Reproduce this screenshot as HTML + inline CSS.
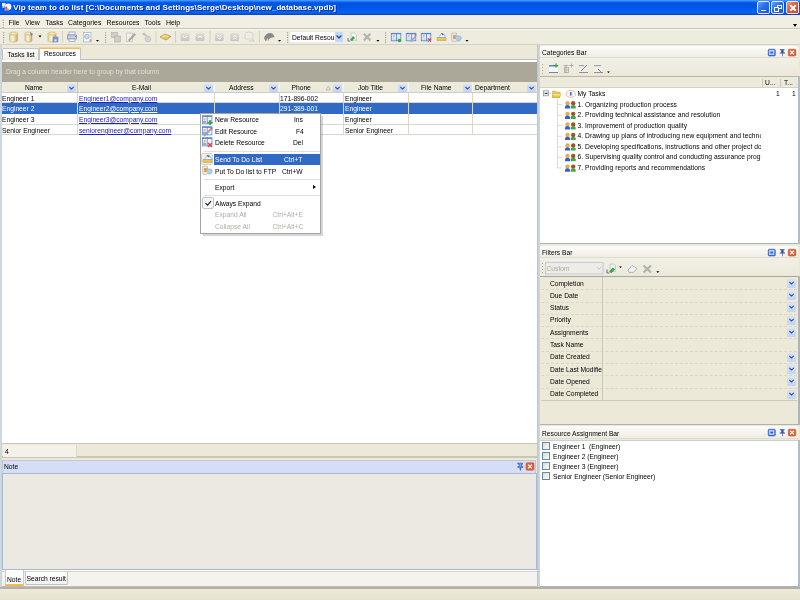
<!DOCTYPE html>
<html><head><meta charset="utf-8">
<style>
*{margin:0;padding:0;box-sizing:border-box}
html,body{width:800px;height:600px;overflow:hidden;background:#ECE9D8;font-family:"Liberation Sans",sans-serif;font-size:6.7px;color:#000;position:relative}
div,span{position:absolute;white-space:nowrap}
#title{left:0;top:0;width:800px;height:15px;background:linear-gradient(#4098FF 0,#3A90FF 1px,#0A5CEA 2px,#0054DF 4px,#0056E4 8px,#0062F6 11px,#0066FA 13px,#1E48B8 14px,#1A3CA0 15px)}
#title .t{left:13.3px;top:3px;color:#fff;font-weight:bold;font-size:8px;letter-spacing:0.07px;text-shadow:1px 1px 0 #0A2A90}
.wb{top:1px;width:13px;height:13px;border:1px solid #E0E8FF;border-radius:2px;background:linear-gradient(135deg,#6CA0FC,#2E6CEC 45%,#1E56D8)}
#menu{left:0;top:15px;width:800px;height:14px;background:#F1EFE3;border-top:1px solid #E6ECFA;border-bottom:1px solid #C9C6B6}
#menu span{top:3.3px;font-size:6.9px}
#tb{left:0;top:29px;width:800px;height:16px;background:#EEEBDF}
.grip{width:2px;background:repeating-linear-gradient(#A8A594 0 1px,transparent 1px 3px)}
.sep{width:1px;background:#C5C2B2;border-right:1px solid #fff}
.dd{width:0;height:0;border-left:2px solid transparent;border-right:2px solid transparent;border-top:2px solid #000}
#left{left:0;top:45px;width:538px;height:543px;background:#ECE9D8}
.hdr{top:82px;height:11px;background:#EBEADB;border-bottom:1px solid #D0CDBE}
.hdr span{top:2px}
.hb{top:84px;width:9px;height:8px;background:linear-gradient(#D6E2FA,#C2D4F6);border-radius:1px}

.row{left:2px;width:535px;height:10.4px;background:#fff;border-bottom:1px solid #D9D6CA}
.row span{top:1.8px}
.row.sel{background:#316AC5;color:#fff}
.lnk{color:#2020C8;text-decoration:underline}
.sel .lnk{color:#fff}
.vl{top:93px;height:41.6px;width:1px;background:#D9D6CA}
.cap{height:12px;background:linear-gradient(#FCFCFA,#EFEDE4);border-bottom:1px solid #E0DDD0;border-radius:2px 2px 0 0}
.cap span{top:3px}
.pbtn{width:8px;height:8px;border-radius:1px}
.blue{background:linear-gradient(#5C8FF0,#2050D0);border:1px solid #1C40B0}
.red{background:linear-gradient(#F07050,#D04020);border:1px solid #B03010}
.ico{width:9px;height:9px;border-radius:1px}
.mi{left:0;width:120px;height:11px}
.mi span{top:2px}
</style></head><body><div id="root" style="left:0;top:0;width:800px;height:600px;overflow:hidden;will-change:transform;background:#ECE9D8">
<!-- Title bar -->
<div id="title">
<svg width="14" height="14" style="position:absolute;left:0;top:0"><rect x="2" y="3" width="3.5" height="3.2" fill="#F0F4FF"/><rect x="2.5" y="6" width="2" height="2" fill="#C8D8F8"/><circle cx="8.2" cy="6.8" r="3.2" fill="#FAFAFF"/><path d="M4.5 8.5 q2 -1 4 0 l0.5 2.3 h-4.5 z" fill="#D88090"/><circle cx="6.3" cy="7.5" r="0.9" fill="#806070"/></svg>
<div class="t">Vip team to do list [C:\Documents and Settings\Serge\Desktop\new_database.vpdb]</div>
<div class="wb" style="left:757px"><div style="left:2.5px;top:7.5px;width:5px;height:1.6px;background:#fff"></div></div>
<div class="wb" style="left:771px"><div style="left:4.5px;top:2.5px;width:5px;height:4px;border:1px solid #fff;border-top-width:1.5px"></div><div style="left:2px;top:5px;width:5px;height:4.5px;border:1px solid #fff;border-top-width:1.5px;background:#2E68E8"></div></div>
<div class="wb" style="left:786px;background:linear-gradient(135deg,#F29A7C,#E2592F 50%,#CC4418)"><div style="left:1.5px;top:5px;width:8px;height:1.8px;background:#fff;transform:rotate(45deg)"></div><div style="left:1.5px;top:5px;width:8px;height:1.8px;background:#fff;transform:rotate(-45deg)"></div></div>
</div>
<!-- Menu -->
<div id="menu">
<svg width="6" height="14" style="position:absolute;left:0;top:0"><g fill="#A8A594"><rect x="2.6" y="3.6" width="1.2" height="1.2"/><rect x="2.6" y="6" width="1.2" height="1.2"/><rect x="2.6" y="8.4" width="1.2" height="1.2"/><rect x="2.6" y="10.8" width="1.2" height="1.2"/></g></svg>
<span style="left:8.5px">File</span><span style="left:25px">View</span><span style="left:45.5px">Tasks</span><span style="left:68px">Categories</span><span style="left:106.5px">Resources</span><span style="left:144.5px">Tools</span><span style="left:166px">Help</span>
<div class="dd" style="left:793px;top:8px;border-width:3px 2.5px 0 2.5px"></div>
</div>
<!-- Toolbar -->
<div id="tb">
<svg width="800" height="16" viewBox="0 29 800 16" style="position:absolute;left:0;top:0">
<defs>
<linearGradient id="cyl" x1="0" x2="1"><stop offset="0" stop-color="#E6D49A"/><stop offset="0.45" stop-color="#FBF4D4"/><stop offset="1" stop-color="#C9A75E"/></linearGradient>
<linearGradient id="gbox" x1="0" y1="0" x2="0" y2="1"><stop offset="0" stop-color="#E2E0D8"/><stop offset="1" stop-color="#C6C4BC"/></linearGradient>
<linearGradient id="card" x1="0" y1="0" x2="0" y2="1"><stop offset="0" stop-color="#F4F8FE"/><stop offset="1" stop-color="#C8DAF4"/></linearGradient>
</defs>
<g fill="#A8A594">
<rect x="3" y="32.2" width="1.2" height="1.2"/><rect x="3" y="34.6" width="1.2" height="1.2"/><rect x="3" y="37" width="1.2" height="1.2"/><rect x="3" y="39.4" width="1.2" height="1.2"/><rect x="3" y="41.8" width="1.2" height="1.2"/>
<rect x="105" y="32.2" width="1.2" height="1.2"/><rect x="105" y="34.6" width="1.2" height="1.2"/><rect x="105" y="37" width="1.2" height="1.2"/><rect x="105" y="39.4" width="1.2" height="1.2"/><rect x="105" y="41.8" width="1.2" height="1.2"/>
<rect x="287" y="32.2" width="1.2" height="1.2"/><rect x="287" y="34.6" width="1.2" height="1.2"/><rect x="287" y="37" width="1.2" height="1.2"/><rect x="287" y="39.4" width="1.2" height="1.2"/><rect x="287" y="41.8" width="1.2" height="1.2"/>
<rect x="385" y="32.2" width="1.2" height="1.2"/><rect x="385" y="34.6" width="1.2" height="1.2"/><rect x="385" y="37" width="1.2" height="1.2"/><rect x="385" y="39.4" width="1.2" height="1.2"/><rect x="385" y="41.8" width="1.2" height="1.2"/>
</g>
<!-- separators -->
<g fill="#D4D1C2"><rect x="62" y="31" width="1" height="12"/><rect x="155.5" y="31" width="1" height="12"/><rect x="175" y="31" width="1" height="12"/><rect x="209.5" y="31" width="1" height="12"/><rect x="259" y="31" width="1" height="12"/></g>
<!-- db cylinders -->
<g stroke="#B89A58" stroke-width="0.5">
<path d="M9.5 33.5 v7 a4 1.5 0 0 0 8 0 v-7 z" fill="url(#cyl)"/><ellipse cx="13.5" cy="33.5" rx="4" ry="1.5" fill="#F6E9B0"/>
<path d="M25 33.5 v7 a3.5 1.5 0 0 0 7 0 v-7 z" fill="url(#cyl)"/><ellipse cx="28.5" cy="33.5" rx="3.5" ry="1.5" fill="#F6E9B0"/>
<path d="M48 33.5 v7 a4 1.5 0 0 0 8 0 v-7 z" fill="url(#cyl)"/><ellipse cx="52" cy="33.5" rx="4" ry="1.5" fill="#F6E9B0"/>
</g>
<path d="M30 32 l3 2.5 l-2 1.5 z" fill="#5C7EC8"/>
<rect x="53" y="37" width="5" height="5" fill="#8898D8" stroke="#6070B8" stroke-width="0.5"/><rect x="54.5" y="39.5" width="2" height="2" fill="#E8ECF8"/>
<g fill="#000"><path d="M38.5 35.5 h3 l-1.5 2 z"/><path d="M96 40 h3 l-1.5 1.8 z"/><path d="M278 40 h3 l-1.5 1.8 z"/><path d="M376.4 40 h3 l-1.5 1.8 z"/><path d="M465.5 40 h3 l-1.5 1.8 z"/></g>
<!-- printer -->
<rect x="69" y="32" width="6" height="3" fill="#F2F4F8" stroke="#8A9AB8" stroke-width="0.7"/>
<rect x="67.5" y="35" width="9" height="4" fill="#C8D0E0" stroke="#7888A8" stroke-width="0.7"/>
<rect x="69" y="39" width="6" height="2.5" fill="#F2F4F8" stroke="#8A9AB8" stroke-width="0.7"/>
<rect x="75" y="36" width="1" height="1" fill="#40B040"/>
<!-- preview -->
<rect x="83.5" y="32.5" width="7.5" height="9.5" fill="#F4F6FA" stroke="#A0A8B8" stroke-width="0.6"/>
<circle cx="87" cy="36.5" r="2.3" fill="#C8DCF4" stroke="#7898C8" stroke-width="0.6"/><rect x="89.5" y="39.5" width="2" height="2" fill="#D89060"/>
<!-- gray disabled icons -->
<g fill="#D0CEC8" stroke="#B0AEA8" stroke-width="0.6">
<rect x="111.5" y="32.5" width="6" height="5"/><rect x="114.5" y="36" width="6" height="6"/>
</g>
<path d="M126.5 33 h6 v8.5 h-6 z" fill="#F0EFEA" stroke="#B8B6B0" stroke-width="0.6"/><path d="M128 40 l6.5 -7 l1.5 1.5 l-6.5 7 z" fill="#A8A6A0"/>
<path d="M142 34 l2 -1.5 l3 3 l-1 1 z" fill="#C0BEB8"/><ellipse cx="148" cy="39" rx="2.8" ry="3" fill="#D8D6D0" stroke="#B8B6B0" stroke-width="0.6"/>
<!-- yellow glasses -->
<path d="M160 37 l5 -3 l6 2.5 l-5 3.5 z" fill="#E8C860" stroke="#A08838" stroke-width="0.6"/><path d="M162 37 l3 -1.5 l3 1.2" stroke="#FFF4C0" stroke-width="0.8" fill="none"/>
<g fill="url(#gbox)"><rect x="180.5" y="33" width="9" height="8" rx="1.2"/><rect x="195.5" y="33" width="9" height="8" rx="1.2"/><rect x="215" y="33" width="8.8" height="8" rx="1.2"/><rect x="230.3" y="33" width="8.8" height="8" rx="1.2"/></g>
<g stroke="#fff" stroke-width="1" fill="none"><path d="M183 36 l2 2 l2 -2"/><path d="M198 38 l2 -2 l2 2"/><path d="M217.5 35 l2 1.5 l2 -1.5 M217.5 37.5 l2 1.5 l2 -1.5"/><path d="M232.8 37 l2 -1.5 l2 1.5 M232.8 39.5 l2 -1.5 l2 1.5"/></g>
<path d="M245 35 a4 3 0 0 1 8 0 v4 h-8 z" fill="#EEEDE8" stroke="#C8C6C0" stroke-width="0.6"/><path d="M249 41 h5 l-1 -1.5" stroke="#B8B6B0" stroke-width="0.6" fill="none"/>
<!-- hat -->
<path d="M264 38 q2 -5 6 -5 q3 0 4.5 4 l-4 1 q-2 1 -2 3 l-3 0 z" fill="#888A86"/><path d="M266 41 l1.5 -3 l1.5 3 z" fill="#D8D8D4"/>
<!-- combo -->
<rect x="290.5" y="32" width="45" height="10" fill="#fff"/>
<rect x="335" y="32" width="8" height="10" rx="1" fill="#C6D6F6"/><path d="M336.6 35.6 l2.4 2.4 l2.4 -2.4" stroke="#2B4C9A" stroke-width="1.4" fill="none"/>
<!-- link -->
<path d="M351 33 h4 l1.5 1.5 v6 h-5.5 z" fill="#F2F6F0" stroke="#A8B0A8" stroke-width="0.5"/>
<path d="M348 41 l0 -3 M348 41 h2" stroke="#6A70C0" stroke-width="1" fill="none"/><path d="M350 40 l3 -4 l2 2 l-3 3 z" fill="#40A840"/>
<path d="M363.8 33.8 l6.6 6.6 M370.4 33.8 l-6.6 6.6" stroke="#B4B4B0" stroke-width="2.2"/>
<!-- resource cards -->
<g fill="url(#card)" stroke="#5A88D0" stroke-width="0.8"><rect x="391.3" y="33.3" width="9.5" height="7.5"/><rect x="406.3" y="33.3" width="9.5" height="7.5"/><rect x="421.3" y="33.3" width="9.5" height="7.5"/></g>
<g fill="#5A88D0"><rect x="391" y="33" width="10" height="1.3"/><rect x="406" y="33" width="10" height="1.3"/><rect x="421" y="33" width="10" height="1.3"/><rect x="396" y="33" width="0.8" height="8"/><rect x="411" y="33" width="0.8" height="8"/><rect x="426" y="33" width="0.8" height="8"/></g>
<g fill="#E8B888"><circle cx="393.8" cy="36.2" r="1.1"/><circle cx="408.8" cy="36.2" r="1.1"/><circle cx="423.8" cy="36.2" r="1.1"/></g>
<circle cx="399.5" cy="40.5" r="1.8" fill="#38A838"/>
<path d="M410 41 l5 -5 l1 1 l-5 5 z" fill="#9A9AD8"/><circle cx="415.5" cy="35" r="1" fill="#E06040"/>
<path d="M428 38.5 l3 3 M431 38.5 l-3 3" stroke="#D84040" stroke-width="1.2"/>
<!-- send -->
<path d="M437 37.5 h9 v3 h-9 z" fill="#E8C850" stroke="#B89830" stroke-width="0.5"/><path d="M438.5 37.5 l3 -4 l3.5 1.5 v2.5 z" fill="#F4F6FA" stroke="#6A88C8" stroke-width="0.5"/><path d="M441 33 l3 1 l-1.5 1.5 z" fill="#3060C0"/>
<!-- ftp -->
<path d="M451.5 33 v7.5 a2.5 1 0 0 0 5 0 v-7.5 z" fill="#E8E6E0" stroke="#A8A8A0" stroke-width="0.5"/><rect x="453" y="35" width="3" height="4" fill="#E0A060"/><path d="M456 36 l4 0 l1.5 2 l-2 3 l-3 0" fill="#A8D0F0" stroke="#7898B8" stroke-width="0.5"/>
<rect x="0" y="29" width="800" height="1" fill="#F8F7F0"/><rect x="0" y="44" width="800" height="1.5" fill="#D2D2CA"/>
</svg>
<span style="left:292px;top:4.8px">Default Resou</span>
</div>
<!-- Left panel -->
<div id="left" style="left:0;top:45px;width:538px;height:543px">
<div style="left:0;top:0;width:2px;height:543px;background:linear-gradient(90deg,#D4DCE4,#C8D0DA 70%,#E0E4E8)"></div>

</div>
<!-- tabs -->
<div style="left:2px;top:59px;width:535px;height:1px;background:#BCC0C0"></div>
<div style="left:2px;top:48px;width:37px;height:12px;background:linear-gradient(#FFFFFF,#ECEBE4);border:1px solid #C2C6C2;border-bottom:none;border-radius:2px 2px 0 0"><span style="left:4.5px;top:2.2px">Tasks list</span></div>
<div style="left:39px;top:47px;width:42px;height:14px;background:#FCFCFE;border:1px solid #C2C6C2;border-bottom:none;border-radius:2px 2px 0 0"><div style="left:-1px;top:-1px;width:42px;height:2px;background:linear-gradient(#F8DCA0,#EEB450);border-radius:2px 2px 0 0"></div><span style="left:4px;top:2.2px">Resources</span></div>
<!-- grid -->
<div style="left:2px;top:60px;width:535px;height:1.5px;background:#fff"></div>
<div style="left:2px;top:61.5px;width:535px;height:20.5px;background:#ABA89A"><span style="left:4px;top:6.3px;color:#E0DED4">Drag a column header here to group by that column</span></div>
<div style="left:2px;top:82px;width:535px;height:11px;background:#F6F5EE;border-bottom:1px solid #D0CDBE"></div>
<div class="hdr" style="left:2px;width:75px"><span style="left:23px">Name</span></div>
<div class="hdr" style="left:78px;width:136px"><span style="left:54px">E-Mail</span></div>
<div class="hdr" style="left:215px;width:64px"><span style="left:14px">Address</span></div>
<div class="hdr" style="left:280px;width:63px"><span style="left:11.5px">Phone</span></div>
<div class="hdr" style="left:344px;width:64px"><span style="left:14px">Job Title</span></div>
<div class="hdr" style="left:409px;width:63px"><span style="left:12px">File Name</span></div>
<div class="hdr" style="left:473px;width:64px"><span style="left:2px">Department</span></div>
<div style="left:77px;top:82px;width:1px;height:11px;background:#fff;border-left:1px solid #C9C6B5"></div>
<div class="hb" style="left:67px"><svg width="9" height="8" style="position:absolute;left:0;top:0"><path d="M2.3 2.8 L4.5 5 L6.7 2.8" stroke="#30487E" stroke-width="1.05" fill="none"/></svg></div><div class="hb" style="left:204px"><svg width="9" height="8" style="position:absolute;left:0;top:0"><path d="M2.3 2.8 L4.5 5 L6.7 2.8" stroke="#30487E" stroke-width="1.05" fill="none"/></svg></div><div class="hb" style="left:269px"><svg width="9" height="8" style="position:absolute;left:0;top:0"><path d="M2.3 2.8 L4.5 5 L6.7 2.8" stroke="#30487E" stroke-width="1.05" fill="none"/></svg></div><div class="hb" style="left:333px"><svg width="9" height="8" style="position:absolute;left:0;top:0"><path d="M2.3 2.8 L4.5 5 L6.7 2.8" stroke="#30487E" stroke-width="1.05" fill="none"/></svg></div><div class="hb" style="left:398px"><svg width="9" height="8" style="position:absolute;left:0;top:0"><path d="M2.3 2.8 L4.5 5 L6.7 2.8" stroke="#30487E" stroke-width="1.05" fill="none"/></svg></div><div class="hb" style="left:463px"><svg width="9" height="8" style="position:absolute;left:0;top:0"><path d="M2.3 2.8 L4.5 5 L6.7 2.8" stroke="#30487E" stroke-width="1.05" fill="none"/></svg></div><div class="hb" style="left:527px"><svg width="9" height="8" style="position:absolute;left:0;top:0"><path d="M2.3 2.8 L4.5 5 L6.7 2.8" stroke="#30487E" stroke-width="1.05" fill="none"/></svg></div>
<svg width="8" height="8" style="position:absolute;left:324px;top:84px"><path d="M2 6 L4.2 2 L6.4 6 Z" fill="none" stroke="#B4B2A8" stroke-width="0.8"/></svg>

<div style="left:2px;top:93px;width:535px;height:350px;background:#fff"></div>
<div class="row" style="top:93px;height:10px"><span style="left:0">Engineer 1</span><span class="lnk" style="left:77px">Engineer1@company.com</span><span style="left:278px">171-896-002</span><span style="left:343px">Engineer</span></div>
<div class="row sel" style="top:103px;height:11px;border-bottom-color:#316AC5"><span style="left:0">Engineer 2</span><span class="lnk" style="left:77px">Engineer2@company.com</span><span style="left:278px">291-389-001</span><span style="left:343px">Engineer</span></div>
<div class="row" style="top:114px;height:11px"><span style="left:0">Engineer 3</span><span class="lnk" style="left:77px">Engineer3@company.com</span><span style="left:278px">291-389-001</span><span style="left:343px">Engineer</span></div>
<div class="row" style="top:125px;height:10px"><span style="left:0">Senior Engineer</span><span class="lnk" style="left:77px">seniorengineer@company.com</span><span style="left:278px">291-389-001</span><span style="left:343px">Senior Engineer</span></div>
<div class="vl" style="left:77px"></div><div class="vl" style="left:214px"></div><div class="vl" style="left:279px"></div><div class="vl" style="left:343px"></div><div class="vl" style="left:408px"></div><div class="vl" style="left:472px"></div>
<!-- footer -->
<div style="left:2px;top:443px;width:535px;height:1px;background:#C9C6B6"></div>
<div style="left:2px;top:444px;width:535px;height:14px;background:#ECE9D8;border-bottom:2px solid #C9C6B6"></div>
<div style="left:3px;top:445px;width:74px;height:12px;background:#F3F2EA;border-right:1px solid #DCD9CC"><span style="left:2px;top:2.5px">4</span></div>
<!-- Note panel -->
<div style="left:2px;top:460px;width:534px;height:13px;background:#D5DEF6;border:1px solid #C0C8DC;border-bottom:none"><span style="left:1px;top:2.2px">Note</span></div>
<svg width="20" height="9" viewBox="516 462 20 9" style="position:absolute;left:516px;top:462px"><path d="M517.5 463.2 h5 v1 h-1 v2.2 h1.5 v1 h-2.3 v2.8 h-0.6 v-2.8 h-2.3 v-1 h1.5 v-2.2 h-1 z" fill="#7AA0E8" stroke="#2E4C9C" stroke-width="0.6"/><rect x="526" y="462.8" width="8" height="7.4" rx="1.2" fill="#E06038" stroke="#C04820" stroke-width="0.5"/><path d="M528.1 464.6 l3.8 3.8 M531.9 464.6 l-3.8 3.8" stroke="#fff" stroke-width="1.3"/></svg>
<div style="left:2px;top:473px;width:535px;height:97px;background:#EBE9E1;border:1px solid #A8B8CC"></div>
<!-- bottom tabs -->
<div style="left:2px;top:569.5px;width:535px;height:17.5px;background:#F4F3EE;border-top:1px solid #FFFFFF;border-bottom:1px solid #C4C1B2"></div><div style="left:2px;top:571px;width:535px;height:1px;background:#D0D4D0"></div>
<div style="left:4.5px;top:570px;width:19px;height:15.5px;background:#FCFCFE;border-left:1px solid #C8CCD0;border-right:1px solid #C8CCD0"><div style="left:-1px;top:13.5px;width:19px;height:2px;background:linear-gradient(#F4C870,#E8A838);border-radius:0 0 2px 2px"></div><span style="left:1.5px;top:5.6px">Note</span></div>
<div style="left:24.5px;top:571.5px;width:43px;height:13.5px;background:linear-gradient(#FFFFFF,#F0F0EC);border:1px solid #B8C4D0;border-top:none;border-radius:0 0 2px 2px"><span style="left:1px;top:3.8px">Search result</span></div>
<!-- Right panels -->
<div style="left:538px;top:45px;width:262px;height:543px;background:#ECE9D8"></div>
<div style="left:537px;top:45px;width:3px;height:542px;background:linear-gradient(90deg,#B4BEC8 0,#C6D0DA 1px,#CCD6DE 2.5px,#E8ECF0 3px)"></div>
<div style="left:798px;top:76px;width:2px;height:168px;background:#B0BCC8"></div><div style="left:798px;top:276px;width:2px;height:148.5px;background:#B0B4B4"></div><div style="left:798px;top:440px;width:2px;height:147px;background:#B0BCC8"></div>
<!-- Categories -->
<div class="cap" style="left:540px;top:46px;width:258px"><span style="left:2px">Categories Bar</span></div>
<svg width="30" height="9" viewBox="767 48 30 9" style="position:absolute;left:767px;top:48px"><rect x="768.2" y="49.2" width="7.2" height="6.8" rx="1.2" fill="#3A6EE0" stroke="#2A50B8" stroke-width="0.5"/><rect x="769.6" y="50.5" width="4.4" height="4" fill="#9CC0FA" stroke="#E8F0FF" stroke-width="0.6"/><rect x="770.6" y="51.8" width="2.4" height="1.5" fill="#2A58C8"/><path d="M779.5 49.3 h5 v1 h-1 v2.2 h1.5 v1 h-2.3 v2.8 h-0.6 v-2.8 h-2.3 v-1 h1.5 v-2.2 h-1 z" fill="#2E4C9C"/><rect x="788.3" y="49.2" width="7.6" height="6.8" rx="1.2" fill="#E06038" stroke="#C04820" stroke-width="0.5"/><path d="M790.2 50.8 l3.8 3.6 M794 50.8 l-3.8 3.6" stroke="#fff" stroke-width="1.3"/></svg>
<div style="left:540px;top:58px;width:258px;height:18px;background:linear-gradient(#F2F0E6,#EBE8DA)"></div>
<svg width="80" height="16" viewBox="540 59 80 16" style="position:absolute;left:540px;top:59px">
<g fill="#A8A594"><rect x="542" y="64" width="1" height="1"/><rect x="542" y="67" width="1" height="1"/><rect x="542" y="70" width="1" height="1"/><rect x="542" y="73" width="1" height="1"/></g>
<rect x="549" y="65" width="9" height="7.5" fill="#F6F8FC"/><rect x="549" y="65" width="9" height="1.6" fill="#5A88D0"/><rect x="549" y="72" width="9" height="0.9" fill="#6A7890"/>
<path d="M556 63.2 v4.4 M553.8 65.4 h4.4" stroke="#30A030" stroke-width="1"/>
<g fill="none" stroke="#A8A6A0" stroke-width="0.8"><path d="M563.5 65.5 h5 M566 65.5 v7"/><rect x="564.5" y="67.5" width="4" height="5"/><path d="M564.5 70 h4"/></g><path d="M571.5 63.5 v4 M569.5 65.5 h4" stroke="#A8A6A0" stroke-width="0.9"/>
<rect x="579" y="65" width="9" height="7.5" fill="#EFEEEA"/><rect x="579" y="65" width="5" height="1.2" fill="#A8A6A0"/><rect x="579" y="72" width="9" height="0.9" fill="#8A8884"/><path d="M581 71 l6 -6" stroke="#8A8884" stroke-width="1"/>
<rect x="594" y="65" width="9" height="7.5" fill="#EFEEEA"/><rect x="594" y="65" width="7" height="1.2" fill="#A8A6A0"/><rect x="594" y="72" width="9" height="0.9" fill="#8A8884"/><path d="M598 69 l3.5 3.5" stroke="#8A8884" stroke-width="1"/>
<path d="M607 71.5 h3 l-1.5 1.6 z" fill="#000"/>
</svg>
<div style="left:540px;top:76px;width:258px;height:168px;background:#fff;border-top:1px solid #B8B6AA;border-bottom:1px solid #A8B4C0"></div>
<div style="left:540px;top:77px;width:258px;height:11px;background:#EBEADB;border-bottom:1px solid #D6D2C2"></div>
<div style="left:761.5px;top:79px;width:1px;height:8px;background:#CBC7B8"></div>
<div style="left:779.7px;top:79px;width:1px;height:8px;background:#CBC7B8"></div>
<span style="left:765px;top:79px">U...</span><span style="left:784px;top:79px">T...</span>
<!-- tree -->
<svg width="260" height="160" viewBox="538 86 260 160" style="position:absolute;left:538px;top:86px"><defs><linearGradient id="fold" x1="0" y1="0" x2="0" y2="1"><stop offset="0" stop-color="#FCEFA8"/><stop offset="1" stop-color="#E2B830"/></linearGradient></defs><rect x="543.5" y="90.8" width="5" height="5" fill="#F4F4F0" stroke="#8C98A8" stroke-width="0.8"/><rect x="544.6" y="92.8" width="3" height="1" fill="#202020"/><path d="M549 93.3 h2.5" stroke="#C0C0C0" stroke-width="0.6"/><path d="M552.5 91 h3 l1 1 h3.5 v5.5 h-7.5 z" fill="#E8C850" stroke="#C8A030" stroke-width="0.4"/><path d="M553.5 93.5 h7.5 l-1.5 4 h-7.5 z" fill="url(#fold)" stroke="#C8A030" stroke-width="0.4"/><ellipse cx="570.8" cy="93.8" rx="4.6" ry="3.4" fill="none" stroke="#F0B898" stroke-width="1"/><ellipse cx="570.8" cy="93.8" rx="2.4" ry="2.6" fill="#E8F0FA"/><rect x="570" y="92" width="1.6" height="3.6" fill="#4878C8"/><path d="M557.5 98.5 V168.3" stroke="#D0D0D0" stroke-width="0.8"/><path d="M558 104.60 h4" stroke="#D0D0D0" stroke-width="0.8"/><circle cx="567.5" cy="103.30" r="2.2" fill="#F0A850"/><path d="M565 108.40 v-1.8 a2.5 1.6 0 0 1 5 0 v1.8 z" fill="#3060C8"/><circle cx="573.2" cy="103.30" r="2.2" fill="#A0522D"/><path d="M570.7 108.40 v-1.8 a2.5 1.6 0 0 1 5 0 v1.8 z" fill="#40A848"/><path d="M558 115.15 h4" stroke="#D0D0D0" stroke-width="0.8"/><circle cx="567.5" cy="113.85" r="2.2" fill="#F0A850"/><path d="M565 118.95 v-1.8 a2.5 1.6 0 0 1 5 0 v1.8 z" fill="#3060C8"/><circle cx="573.2" cy="113.85" r="2.2" fill="#A0522D"/><path d="M570.7 118.95 v-1.8 a2.5 1.6 0 0 1 5 0 v1.8 z" fill="#40A848"/><path d="M558 125.70 h4" stroke="#D0D0D0" stroke-width="0.8"/><circle cx="567.5" cy="124.40" r="2.2" fill="#F0A850"/><path d="M565 129.50 v-1.8 a2.5 1.6 0 0 1 5 0 v1.8 z" fill="#3060C8"/><circle cx="573.2" cy="124.40" r="2.2" fill="#A0522D"/><path d="M570.7 129.50 v-1.8 a2.5 1.6 0 0 1 5 0 v1.8 z" fill="#40A848"/><path d="M558 136.25 h4" stroke="#D0D0D0" stroke-width="0.8"/><circle cx="567.5" cy="134.95" r="2.2" fill="#F0A850"/><path d="M565 140.05 v-1.8 a2.5 1.6 0 0 1 5 0 v1.8 z" fill="#3060C8"/><circle cx="573.2" cy="134.95" r="2.2" fill="#A0522D"/><path d="M570.7 140.05 v-1.8 a2.5 1.6 0 0 1 5 0 v1.8 z" fill="#40A848"/><path d="M558 146.80 h4" stroke="#D0D0D0" stroke-width="0.8"/><circle cx="567.5" cy="145.50" r="2.2" fill="#F0A850"/><path d="M565 150.60 v-1.8 a2.5 1.6 0 0 1 5 0 v1.8 z" fill="#3060C8"/><circle cx="573.2" cy="145.50" r="2.2" fill="#A0522D"/><path d="M570.7 150.60 v-1.8 a2.5 1.6 0 0 1 5 0 v1.8 z" fill="#40A848"/><path d="M558 157.35 h4" stroke="#D0D0D0" stroke-width="0.8"/><circle cx="567.5" cy="156.05" r="2.2" fill="#F0A850"/><path d="M565 161.15 v-1.8 a2.5 1.6 0 0 1 5 0 v1.8 z" fill="#3060C8"/><circle cx="573.2" cy="156.05" r="2.2" fill="#A0522D"/><path d="M570.7 161.15 v-1.8 a2.5 1.6 0 0 1 5 0 v1.8 z" fill="#40A848"/><path d="M558 167.90 h4" stroke="#D0D0D0" stroke-width="0.8"/><circle cx="567.5" cy="166.60" r="2.2" fill="#F0A850"/><path d="M565 171.70 v-1.8 a2.5 1.6 0 0 1 5 0 v1.8 z" fill="#3060C8"/><circle cx="573.2" cy="166.60" r="2.2" fill="#A0522D"/><path d="M570.7 171.70 v-1.8 a2.5 1.6 0 0 1 5 0 v1.8 z" fill="#40A848"/></svg>
<span style="left:577.5px;top:90px">My Tasks</span><span style="left:776px;top:90px">1</span><span style="left:792px;top:90px">1</span>
<div style="left:0;top:0;width:761px;height:600px;overflow:hidden"><span style="left:577.5px;top:100.60px;letter-spacing:0.04px">1. Organizing production process</span><span style="left:577.5px;top:111.15px;letter-spacing:0.04px">2. Providing technical assistance and resolution</span><span style="left:577.5px;top:121.70px;letter-spacing:0.04px">3. Improvement of production quality</span><span style="left:577.5px;top:132.25px;letter-spacing:0.04px">4. Drawing up plans of introducing new equipment and technology</span><span style="left:577.5px;top:142.80px;letter-spacing:0.04px">5. Developing specifications, instructions and other project documentation</span><span style="left:577.5px;top:153.35px;letter-spacing:0.04px">6. Supervising quality control and conducting assurance programs</span><span style="left:577.5px;top:163.90px;letter-spacing:0.04px">7. Providing reports and recommendations</span></div>
<!-- Filters -->
<div class="cap" style="left:540px;top:246px;width:258px"><span style="left:2px">Filters Bar</span></div>
<svg width="30" height="9" viewBox="767 248 30 9" style="position:absolute;left:767px;top:248px"><rect x="768.2" y="249.2" width="7.2" height="6.8" rx="1.2" fill="#3A6EE0" stroke="#2A50B8" stroke-width="0.5"/><rect x="769.6" y="250.5" width="4.4" height="4" fill="#9CC0FA" stroke="#E8F0FF" stroke-width="0.6"/><rect x="770.6" y="251.8" width="2.4" height="1.5" fill="#2A58C8"/><path d="M779.5 249.3 h5 v1 h-1 v2.2 h1.5 v1 h-2.3 v2.8 h-0.6 v-2.8 h-2.3 v-1 h1.5 v-2.2 h-1 z" fill="#2E4C9C"/><rect x="788.3" y="249.2" width="7.6" height="6.8" rx="1.2" fill="#E06038" stroke="#C04820" stroke-width="0.5"/><path d="M790.2 250.8 l3.8 3.6 M794 250.8 l-3.8 3.6" stroke="#fff" stroke-width="1.3"/></svg>
<div style="left:540px;top:258px;width:258px;height:19px;background:linear-gradient(#F2F0E6,#EBE8DA)"></div>
<svg width="130" height="18" viewBox="540 259 130 18" style="position:absolute;left:540px;top:259px">
<g fill="#A8A594"><rect x="542" y="263" width="1" height="1"/><rect x="542" y="266" width="1" height="1"/><rect x="542" y="269" width="1" height="1"/><rect x="542" y="272" width="1" height="1"/></g>
<rect x="545.5" y="262.5" width="57.5" height="11.5" fill="#EDECE6" stroke="#C0CAD8" stroke-width="0.9"/>
<path d="M597 267.2 l2 2 l2 -2" stroke="#B8B8B0" stroke-width="0.8" fill="none"/>
<path d="M610 264 h4 l1.5 1.5 v6 h-5.5 z" fill="#EEF2F8" stroke="#A0A8B8" stroke-width="0.5"/>
<path d="M607 273 v-3.5 M607 273 h2.5" stroke="#6A70C8" stroke-width="1.1" fill="none"/><path d="M609 272 l3.5 -4.5 l2.5 2 l-3.5 3.5 z" fill="#38A838"/>
<path d="M619 266.5 h3 l-1.5 1.6 z" fill="#000"/>
<path d="M628 270 l4 -4.5 l5 3 l-3.5 3.8 h-4.5 z" fill="#F4F4F2" stroke="#A0A09C" stroke-width="0.8"/>
<path d="M643.5 265.5 l7.5 7 M651 265.5 l-7.5 7" stroke="#B0B0AC" stroke-width="2"/>
<path d="M656.3 271.3 h3 l-1.5 1.6 z" fill="#000"/>
</svg>
<span style="left:546.5px;top:264.8px;color:#ADADA6">Custom</span>
<div style="left:540px;top:276px;width:258px;height:148.5px;background:#ECE9D8;border-top:1.5px solid #A8A69A;border-bottom:1.5px solid #AEB2B0"></div>
<div style="left:541px;top:278.0px;width:256px;height:12.3px;border-bottom:1px dashed #DAD6C8"></div><div style="left:541px;top:277.0px;width:62px;height:12.3px;overflow:hidden"><span style="left:9px;top:2.5px">Completion</span></div><div class="hb" style="left:787px;top:278.8px;width:9px;height:9px"><svg width="9" height="8" style="position:absolute;left:0;top:0"><path d="M2.3 2.8 L4.5 5 L6.7 2.8" stroke="#30487E" stroke-width="1.05" fill="none"/></svg></div><div style="left:541px;top:290.3px;width:256px;height:12.3px;border-bottom:1px dashed #DAD6C8"></div><div style="left:541px;top:289.3px;width:62px;height:12.3px;overflow:hidden"><span style="left:9px;top:2.5px">Due Date</span></div><div class="hb" style="left:787px;top:291.1px;width:9px;height:9px"><svg width="9" height="8" style="position:absolute;left:0;top:0"><path d="M2.3 2.8 L4.5 5 L6.7 2.8" stroke="#30487E" stroke-width="1.05" fill="none"/></svg></div><div style="left:541px;top:302.6px;width:256px;height:12.3px;border-bottom:1px dashed #DAD6C8"></div><div style="left:541px;top:301.6px;width:62px;height:12.3px;overflow:hidden"><span style="left:9px;top:2.5px">Status</span></div><div class="hb" style="left:787px;top:303.4px;width:9px;height:9px"><svg width="9" height="8" style="position:absolute;left:0;top:0"><path d="M2.3 2.8 L4.5 5 L6.7 2.8" stroke="#30487E" stroke-width="1.05" fill="none"/></svg></div><div style="left:541px;top:314.9px;width:256px;height:12.3px;border-bottom:1px dashed #DAD6C8"></div><div style="left:541px;top:313.9px;width:62px;height:12.3px;overflow:hidden"><span style="left:9px;top:2.5px">Priority</span></div><div class="hb" style="left:787px;top:315.7px;width:9px;height:9px"><svg width="9" height="8" style="position:absolute;left:0;top:0"><path d="M2.3 2.8 L4.5 5 L6.7 2.8" stroke="#30487E" stroke-width="1.05" fill="none"/></svg></div><div style="left:541px;top:327.2px;width:256px;height:12.3px;border-bottom:1px dashed #DAD6C8"></div><div style="left:541px;top:326.2px;width:62px;height:12.3px;overflow:hidden"><span style="left:9px;top:2.5px">Assignments</span></div><div class="hb" style="left:787px;top:328.0px;width:9px;height:9px"><svg width="9" height="8" style="position:absolute;left:0;top:0"><path d="M2.3 2.8 L4.5 5 L6.7 2.8" stroke="#30487E" stroke-width="1.05" fill="none"/></svg></div><div style="left:541px;top:339.5px;width:256px;height:12.3px;border-bottom:1px dashed #DAD6C8"></div><div style="left:541px;top:338.5px;width:62px;height:12.3px;overflow:hidden"><span style="left:9px;top:2.5px">Task Name</span></div><div style="left:541px;top:351.8px;width:256px;height:12.3px;border-bottom:1px dashed #DAD6C8"></div><div style="left:541px;top:350.8px;width:62px;height:12.3px;overflow:hidden"><span style="left:9px;top:2.5px">Date Created</span></div><div class="hb" style="left:787px;top:352.6px;width:9px;height:9px"><svg width="9" height="8" style="position:absolute;left:0;top:0"><path d="M2.3 2.8 L4.5 5 L6.7 2.8" stroke="#30487E" stroke-width="1.05" fill="none"/></svg></div><div style="left:541px;top:364.1px;width:256px;height:12.3px;border-bottom:1px dashed #DAD6C8"></div><div style="left:541px;top:363.1px;width:62px;height:12.3px;overflow:hidden"><span style="left:9px;top:2.5px">Date Last Modified</span></div><div class="hb" style="left:787px;top:364.9px;width:9px;height:9px"><svg width="9" height="8" style="position:absolute;left:0;top:0"><path d="M2.3 2.8 L4.5 5 L6.7 2.8" stroke="#30487E" stroke-width="1.05" fill="none"/></svg></div><div style="left:541px;top:376.4px;width:256px;height:12.3px;border-bottom:1px dashed #DAD6C8"></div><div style="left:541px;top:375.4px;width:62px;height:12.3px;overflow:hidden"><span style="left:9px;top:2.5px">Date Opened</span></div><div class="hb" style="left:787px;top:377.2px;width:9px;height:9px"><svg width="9" height="8" style="position:absolute;left:0;top:0"><path d="M2.3 2.8 L4.5 5 L6.7 2.8" stroke="#30487E" stroke-width="1.05" fill="none"/></svg></div><div style="left:541px;top:388.7px;width:256px;height:12.3px;border-bottom:1px dashed #DAD6C8"></div><div style="left:541px;top:387.7px;width:62px;height:12.3px;overflow:hidden"><span style="left:9px;top:2.5px">Date Completed</span></div><div class="hb" style="left:787px;top:389.5px;width:9px;height:9px"><svg width="9" height="8" style="position:absolute;left:0;top:0"><path d="M2.3 2.8 L4.5 5 L6.7 2.8" stroke="#30487E" stroke-width="1.05" fill="none"/></svg></div><div style="left:602px;top:277px;width:1px;height:123px;background:#CDC9B9"></div><div style="left:541px;top:400px;width:256px;height:1px;background:#CFCBBB"></div>
<!-- Resource assignment -->
<div class="cap" style="left:540px;top:426px;width:258px;height:13px"><span style="left:2px;top:4px">Resource Assignment Bar</span></div>
<svg width="30" height="9" viewBox="767 428 30 9" style="position:absolute;left:767px;top:428px"><rect x="768.2" y="429.2" width="7.2" height="6.8" rx="1.2" fill="#3A6EE0" stroke="#2A50B8" stroke-width="0.5"/><rect x="769.6" y="430.5" width="4.4" height="4" fill="#9CC0FA" stroke="#E8F0FF" stroke-width="0.6"/><rect x="770.6" y="431.8" width="2.4" height="1.5" fill="#2A58C8"/><path d="M779.5 429.3 h5 v1 h-1 v2.2 h1.5 v1 h-2.3 v2.8 h-0.6 v-2.8 h-2.3 v-1 h1.5 v-2.2 h-1 z" fill="#2E4C9C"/><rect x="788.3" y="429.2" width="7.6" height="6.8" rx="1.2" fill="#E06038" stroke="#C04820" stroke-width="0.5"/><path d="M790.2 430.8 l3.8 3.6 M794 430.8 l-3.8 3.6" stroke="#fff" stroke-width="1.3"/></svg>
<div style="left:540px;top:440px;width:258px;height:147px;background:#fff;border-top:1px solid #C8D0D8;border-bottom:1px solid #A8B4C0"></div>
<div style="left:542px;top:441.7px;width:8px;height:8px;border:1px solid #6A88A8;background:linear-gradient(135deg,#DCDCD6,#FAFAF8)"></div><span style="left:553px;top:443.0px">Engineer 1&nbsp; (Engineer)</span><div style="left:542px;top:451.7px;width:8px;height:8px;border:1px solid #6A88A8;background:linear-gradient(135deg,#DCDCD6,#FAFAF8)"></div><span style="left:553px;top:453.0px">Engineer 2 (Engineer)</span><div style="left:542px;top:461.7px;width:8px;height:8px;border:1px solid #6A88A8;background:linear-gradient(135deg,#DCDCD6,#FAFAF8)"></div><span style="left:553px;top:463.0px">Engineer 3 (Engineer)</span><div style="left:542px;top:471.7px;width:8px;height:8px;border:1px solid #6A88A8;background:linear-gradient(135deg,#DCDCD6,#FAFAF8)"></div><span style="left:553px;top:473.0px">Senior Engineer (Senior Engineer)</span>
<!-- status -->
<div style="left:0;top:587px;width:800px;height:1.5px;background:#B4B0A4"></div>
<div style="left:0;top:588.5px;width:800px;height:11.5px;background:linear-gradient(#EDEADA,#E6E2CF)"></div>

<!-- context menu -->
<div style="left:202.5px;top:115.5px;width:120.5px;height:120.5px;background:rgba(0,0,0,0.16);filter:blur(0.7px)"></div>
<div style="left:200px;top:113px;width:121px;height:121px;background:#fff;border:1px solid #A4A4A4">
<svg width="14" height="122" viewBox="201 114 14 122" style="position:absolute;left:0;top:0"><rect x="202.4" y="115.9" width="9.5" height="8" fill="#F0F6FE" stroke="#5A88D0" stroke-width="0.8"/><rect x="202" y="115.5" width="10.3" height="1.4" fill="#5A88D0"/><rect x="206.8" y="115.5" width="0.8" height="8.6" fill="#5A88D0"/><circle cx="204.6" cy="118.9" r="1.2" fill="#E8B888"/><path d="M203 123.3 v-1.6 a1.6 1.2 0 0 1 3.2 0 v1.6 z" fill="#B8A890"/><path d="M210 120 v5 M207.5 122.5 h5" stroke="#30A030" stroke-width="1.6"/><rect x="202.4" y="126.9" width="9.5" height="8" fill="#F0F6FE" stroke="#5A88D0" stroke-width="0.8"/><rect x="202" y="126.5" width="10.3" height="1.4" fill="#5A88D0"/><rect x="206.8" y="126.5" width="0.8" height="8.6" fill="#5A88D0"/><circle cx="204.6" cy="129.9" r="1.2" fill="#E8B888"/><path d="M203 134.3 v-1.6 a1.6 1.2 0 0 1 3.2 0 v1.6 z" fill="#B8A890"/><path d="M204 136 l6.5 -6.5" stroke="#9A9AD8" stroke-width="1.8"/><path d="M210.5 129.5 l1.5 -1.5" stroke="#E06040" stroke-width="1.8"/><rect x="202.4" y="137.9" width="9.5" height="8" fill="#F0F6FE" stroke="#5A88D0" stroke-width="0.8"/><rect x="202" y="137.5" width="10.3" height="1.4" fill="#5A88D0"/><rect x="206.8" y="137.5" width="0.8" height="8.6" fill="#5A88D0"/><circle cx="204.6" cy="140.9" r="1.2" fill="#E8B888"/><path d="M203 145.3 v-1.6 a1.6 1.2 0 0 1 3.2 0 v1.6 z" fill="#B8A890"/><path d="M208 143 l4 4 M212 143 l-4 4" stroke="#E04040" stroke-width="1.4"/><rect x="201.5" y="153.5" width="11" height="11" rx="1" fill="#F4F0E4" stroke="#C8C0A8" stroke-width="0.7"/><path d="M203 159.5 h9 v3 h-9 z" fill="#E8C850" stroke="#B89830" stroke-width="0.5"/><path d="M204.5 159.5 l2.5 -4 l4 1.5 v2.5 z" fill="#F4F6FA" stroke="#6A88C8" stroke-width="0.5"/><path d="M206.5 155 l3.5 0.8 l-1.8 1.8 z" fill="#3060C0"/><path d="M202.5 166 v7.5 a2.5 1 0 0 0 5 0 v-7.5 z" fill="#E8E6E0" stroke="#A8A8A0" stroke-width="0.5"/><rect x="204" y="168" width="3" height="4" fill="#E0A060"/><path d="M207 169 l4 0 l1.5 2 l-2 3 l-3 0" fill="#A8D0F0" stroke="#7898B8" stroke-width="0.5"/></svg>
<span style="left:14px;top:2.3px">New Resource</span><span style="left:93px;top:2.3px">Ins</span>
<span style="left:14px;top:13.5px">Edit Resource</span><span style="left:95px;top:13.5px">F4</span>
<span style="left:14px;top:24.8px">Delete Resource</span><span style="left:92px;top:24.8px">Del</span>
<div style="left:3px;top:36.5px;width:116px;height:1px;background:#E2E0D8"></div>
<div style="left:13px;top:40px;width:106px;height:11px;background:#316AC5"></div>
<span style="left:14px;top:42px;color:#fff">Send To Do List</span><span style="left:83px;top:42px;color:#fff">Ctrl+T</span>
<span style="left:14px;top:53.5px">Put To Do list to FTP</span><span style="left:81px;top:53.5px">Ctrl+W</span>
<div style="left:3px;top:64.7px;width:116px;height:1px;background:#E2E0D8"></div>
<span style="left:14px;top:69.5px">Export</span>
<div style="left:112px;top:71px;width:0;height:0;border-top:2.5px solid transparent;border-bottom:2.5px solid transparent;border-left:3px solid #000"></div>
<div style="left:3px;top:80.5px;width:116px;height:1px;background:#E2E0D8"></div>
<div style="left:1px;top:83px;width:12px;height:12px;background:#F6F6F2;border:1px solid #B8C4D4;border-radius:2px"><svg width="10" height="10" style="position:absolute;left:0;top:0"><path d="M2.5 5.2 l2 2 l3.5 -4" stroke="#202020" stroke-width="1.2" fill="none"/></svg></div>
<span style="left:14px;top:85.5px">Always Expand</span>
<span style="left:14px;top:97px;color:#B0AEA4">Expand All</span><span style="left:71.5px;top:97px;color:#B0AEA4">Ctrl+Alt+E</span>
<span style="left:14px;top:108.5px;color:#B0AEA4">Collapse All</span><span style="left:71.5px;top:108.5px;color:#B0AEA4">Ctrl+Alt+C</span>
</div>
</div></body></html>
